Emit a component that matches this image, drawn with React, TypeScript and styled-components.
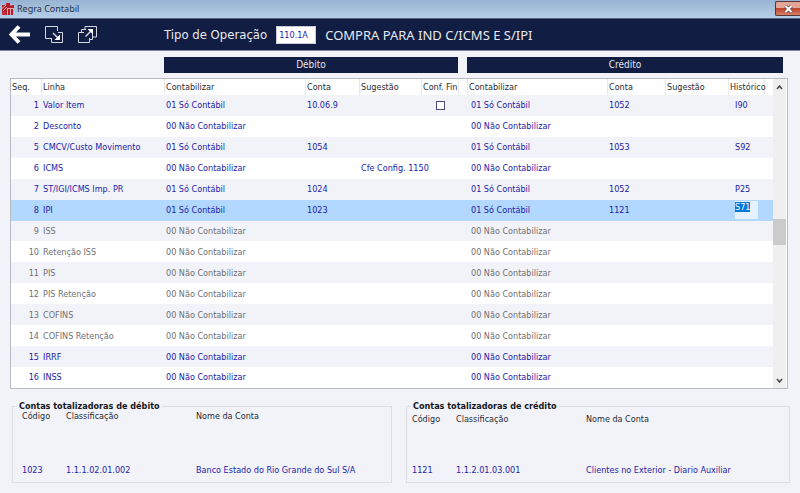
import React, { useEffect, useRef } from "react";
import styled, { createGlobalStyle } from "styled-components";

const navy = "#111d42";
const blue = "#1c1caa";
const grey = "#6f7074";
const bodyFont = `"DejaVu Sans Condensed", "DejaVu Sans", sans-serif`;
const titleFont = `"Noto Sans", sans-serif`;

const GlobalStyle = createGlobalStyle`
  * { box-sizing: border-box; }
  body {
    margin: 0;
    background: #f2f3f9;
    color: #2b2c33;
    font: 9px/12px ${bodyFont};
  }
`;

const TitleBar = styled.header`
  display: flex;
  align-items: flex-start;
  height: 18px;
  padding-left: 2px;
  background: linear-gradient(#98b4d2, #b6cee8);
  h1 {
    flex: 1;
    margin: 0;
    padding: 0 3px;
    font: 9px/18px ${titleFont};
    color: #26313f;
  }
  > svg { margin-top: 3px; }
`;

const CloseButton = styled.button`
  display: grid;
  place-items: center;
  width: 25px;
  height: 15px;
  margin-top: 1px;
  padding: 0;
  border: 1px solid #5e3535;
  border-right: 0;
  border-radius: 2px 0 0 2px;
  background: linear-gradient(#e3a598 0 45%, #bd442d 50%, #d4806a);
`;

const Toolbar = styled.div`
  display: flex;
  align-items: center;
  height: 33px;
  padding-left: 8px;
  border-top: 1px solid #56627f;
  border-bottom: 1px solid #7d859d;
  background: ${navy};
  color: #e8e9f0;
  font: 13px/18px ${bodyFont};
`;

const Actions = styled.nav`
  display: flex;
  align-items: center;
  gap: 14px;
  width: 156px;
`;

const IconButton = styled.button`
  display: flex;
  padding: 0;
  border: 0;
  background: none;
  color: #fff;
`;

const OperationLabel = styled.label`
  display: flex;
  align-items: center;
  gap: 9px;
`;

const OperationInput = styled.input`
  width: 40px;
  height: 18px;
  padding: 0 2px;
  border: 1px solid #c9ccd8;
  background: #fff;
  color: ${blue};
  font: 9px/12px ${bodyFont};
`;

const OperationName = styled.output`
  margin-left: 9px;
  font-family: ${titleFont};
`;

const Content = styled.main`
  padding: 6px 10px 0;
`;

const Sections = styled.div`
  display: grid;
  grid-template-columns: 154fr 294fr 9fr 316fr 7fr;
`;

const SectionTitle = styled.h2<{ $column: number }>`
  grid-column: ${(p) => p.$column};
  margin: 0;
  background: ${navy};
  color: #e4e5ec;
  font: 10px/16px ${bodyFont};
  text-align: center;
`;

const Frame = styled.div`
  display: flex;
  margin: 5px 2px 0 0;
  border: 1px solid #b9bac2;
  background: #fff;
`;

const Grid = styled.table`
  flex: 1;
  width: 0;
  height: 309px;
  table-layout: fixed;
  border-collapse: separate;
  border-spacing: 0;
`;

const Head = styled.th`
  height: 16px;
  padding: 0 0 0 1px;
  border-left: 1px solid #e7e7ec;
  font-weight: 400;
  text-align: left;
  white-space: nowrap;
  &:first-child { border-left: 0; }
`;

const Row = styled.tr<{ $tone: "active" | "muted" | "selected" }>`
  color: ${(p) => (p.$tone === "muted" ? grey : blue)};
  &:nth-child(odd) { background: #f2f3f9; }
  && { ${(p) => p.$tone === "selected" && "background: #b2d8ff;"} }
`;

const Cell = styled.td<{ $indent?: number; $align?: string }>`
  padding: 0 0 0 ${(p) => p.$indent ?? 2}px;
  line-height: 18px;
  text-align: ${(p) => p.$align ?? "left"};
  white-space: nowrap;
`;

const SeqCell = styled(Cell)`
  padding-right: 2px;
`;

const Check = styled.input`
  appearance: none;
  display: block;
  width: 9px;
  height: 9px;
  margin: 0 auto;
  border: 1px solid #4b4b80;
  background: #fff;
`;

const HistoryInput = styled.input`
  display: block;
  width: 23px;
  height: 18px;
  padding: 0 0 7px;
  border: 0;
  outline: 0;
  background: #e6f2ff;
  color: ${blue};
  font: 9px/11px ${bodyFont};
  &::selection { background: #0078d7; color: #fff; }
`;

const ScrollBar = styled.div`
  display: flex;
  flex-direction: column;
  align-items: center;
  justify-content: space-between;
  width: 13px;
  margin-right: 1px;
  background: #efeff0;
`;

const ScrollButton = styled.button`
  display: grid;
  place-items: center;
  width: 13px;
  height: 16px;
  padding: 0;
  border: 0;
  background: none;
`;

const Track = styled.div`
  flex: 1;
  width: 100%;
  display: flex;
  flex-direction: column;
  &::before { content: ""; flex: 124; }
  &::after { content: ""; flex: 128; }
`;

const Thumb = styled.div`
  height: 26px;
  background: #cbcbcc;
`;

const Totals = styled.div`
  display: grid;
  grid-template-columns: 380fr 384fr;
  gap: 14px;
  margin: 11px 0 0 2px;
`;

const Group = styled.fieldset<{ $inset: number }>`
  min-width: 0;
  height: 83px;
  margin: 0;
  padding: 0 0 0 ${(p) => p.$inset}px;
  border: 1px solid #dddee3;
`;

const Legend = styled.legend<{ $pull: number }>`
  margin-left: ${(p) => p.$pull}px;
  padding: 0 2px;
  color: #15161a;
  font-weight: 700;
`;

const Account = styled.dl<{ $top: number }>`
  display: grid;
  grid-template-columns: 44px 130px 1fr;
  grid-auto-flow: column;
  grid-template-rows: 12px 12px;
  row-gap: ${(p) => 42 - p.$top}px;
  margin: ${(p) => p.$top - 2}px 0 0;
  dt, dd { margin: 0; white-space: nowrap; }
  dd { color: ${blue}; }
`;

type Line = {
  seq: number;
  name: string;
  posted?: boolean;
  debit?: string;
  suggestion?: string;
  check?: boolean;
  credit?: string;
  history?: string;
  tone?: "active" | "muted" | "selected";
};

const lines: Line[] = [
  { seq: 1, name: "Valor Item", posted: true, debit: "10.06.9", check: true, credit: "1052", history: "I90" },
  { seq: 2, name: "Desconto" },
  { seq: 5, name: "CMCV/Custo Movimento", posted: true, debit: "1054", credit: "1053", history: "S92" },
  { seq: 6, name: "ICMS", suggestion: "Cfe Config. 1150" },
  { seq: 7, name: "ST/IGI/ICMS Imp. PR", posted: true, debit: "1024", credit: "1052", history: "P25" },
  { seq: 8, name: "IPI", posted: true, debit: "1023", credit: "1121", history: "S71", tone: "selected" },
  { seq: 9, name: "ISS", tone: "muted" },
  { seq: 10, name: "Retenção ISS", tone: "muted" },
  { seq: 11, name: "PIS", tone: "muted" },
  { seq: 12, name: "PIS Retenção", tone: "muted" },
  { seq: 13, name: "COFINS", tone: "muted" },
  { seq: 14, name: "COFINS Retenção", tone: "muted" },
  { seq: 15, name: "IRRF" },
  { seq: 16, name: "INSS" },
];

const columns: [string, number][] = [
  ["Seq.", 30], ["Linha", 123], ["Contabilizar", 141], ["Conta", 54],
  ["Sugestão", 62], ["Conf. Fin", 37], ["", 9], ["Contabilizar", 140],
  ["Conta", 58], ["Sugestão", 63], ["Histórico", 36], ["", 9],
];

function Logo() {
  return (
    <svg width="12" height="12" viewBox="0 0 12 12" aria-hidden="true">
      <path d="M0 2h4V0h4v2h4v10H0z" fill="#b3202c" />
      <path d="M0 5.500 4 2M1 8l4-4M5.500 12V6M8.500 12V6M11.500 12V6M5 5.500h7M9 1v2" stroke="#e3a3ab" fill="none" />
      <path d="M0 9h4v3H0z" fill="#c8323e" />
    </svg>
  );
}

function BackIcon() {
  return (
    <svg width="23" height="20" viewBox="0 0 23 20" fill="none" stroke="currentColor" aria-hidden="true">
      <path d="M22 9.500H4" strokeWidth="4" />
      <path d="M11 1.500 3.500 9.500l7.500 8" strokeWidth="4" />
    </svg>
  );
}

function ImportIcon() {
  return (
    <svg width="19" height="19" viewBox="0 0 19 19" fill="none" stroke="#d6d9e4" aria-hidden="true">
      <path d="M7 13.500H.500v-12h12V6" />
      <path d="M13 7.500h4.500v10h-11V13" />
      <path d="m8 8 6.500 6.500" strokeWidth="1.500" />
      <path d="M15 9.500V15H9.500z" fill="#fff" stroke="none" />
    </svg>
  );
}

function ExportIcon() {
  return (
    <svg width="19" height="19" viewBox="0 0 19 19" fill="none" stroke="#d6d9e4" aria-hidden="true">
      <path d="M6 7.500H.500v10h11V13" />
      <path d="M3.500 7V4.500H8M14.500 9v5.500H12" />
      <path d="M7 4V1.500h11.500V12H15" />
      <path d="m7.500 11.500 6.500-6.500" strokeWidth="1.500" />
      <path d="M9.500 4H15v5.500z" fill="#fff" stroke="none" />
    </svg>
  );
}

function Chevron({ up = false }: { up?: boolean }) {
  return (
    <svg width="7" height="5" viewBox="0 0 7 5" fill="none" stroke="#45464a" strokeWidth="1.500" aria-hidden="true">
      <path d={up ? "M1 4l2.500-3L6 4" : "M1 1l2.500 3L6 1"} />
    </svg>
  );
}

function SelectedHistory({ value }: { value: string }) {
  const ref = useRef<HTMLInputElement>(null);
  useEffect(() => {
    ref.current?.focus();
    ref.current?.select();
  }, []);
  return <HistoryInput ref={ref} defaultValue={value} aria-label="Histórico" />;
}

function LineRow({ line }: { line: Line }) {
  const tone = line.tone ?? "active";
  const mode = line.posted ? "01 Só Contábil" : "00 Não Contabilizar";
  return (
    <Row $tone={tone}>
      <SeqCell $align="right">{line.seq}</SeqCell>
      <Cell>{line.name}</Cell>
      <Cell>{mode}</Cell>
      <Cell>{line.debit}</Cell>
      <Cell>{line.suggestion}</Cell>
      <Cell>{line.check && <Check type="checkbox" aria-label="Conf. Fin" />}</Cell>
      <Cell />
      <Cell $indent={4}>{mode}</Cell>
      <Cell>{line.credit}</Cell>
      <Cell />
      <Cell $indent={7}>
        {tone === "selected" ? <SelectedHistory value={line.history ?? ""} /> : line.history}
      </Cell>
      <Cell />
    </Row>
  );
}

function AccountGroup(props: {
  title: string; inset: number; pull: number; top: number;
  code: string; classification: string; name: string;
}) {
  return (
    <Group $inset={props.inset}>
      <Legend $pull={props.pull}>{props.title}</Legend>
      <Account $top={props.top}>
        <dt>Código</dt><dd>{props.code}</dd>
        <dt>Classificação</dt><dd>{props.classification}</dd>
        <dt>Nome da Conta</dt><dd>{props.name}</dd>
      </Account>
    </Group>
  );
}

export default function App() {
  return (
    <>
      <GlobalStyle />
      <TitleBar>
        <Logo />
        <h1>Regra Contabil</h1>
        <CloseButton aria-label="Fechar">
          <svg width="9" height="8" viewBox="0 0 9 8" aria-hidden="true">
            <path d="m1.500 1 6 6m0-6-6 6" stroke="#5d4a4c" strokeWidth="3.500" />
            <path d="m1.500 1 6 6m0-6-6 6" stroke="#fff" strokeWidth="2" />
          </svg>
        </CloseButton>
      </TitleBar>
      <Toolbar>
        <Actions>
          <IconButton aria-label="Voltar"><BackIcon /></IconButton>
          <IconButton aria-label="Importar"><ImportIcon /></IconButton>
          <IconButton aria-label="Exportar"><ExportIcon /></IconButton>
        </Actions>
        <OperationLabel>
          Tipo de Operação
          <OperationInput defaultValue="110.1A" />
        </OperationLabel>
        <OperationName>COMPRA PARA IND C/ICMS E S/IPI</OperationName>
      </Toolbar>
      <Content>
        <Sections>
          <SectionTitle $column={2}>Débito</SectionTitle>
          <SectionTitle $column={4}>Crédito</SectionTitle>
        </Sections>
        <Frame>
          <Grid>
            <colgroup>
              {columns.map(([, width], i) => <col key={i} width={width} />)}
            </colgroup>
            <thead>
              <tr>{columns.map(([label], i) => <Head key={i}>{label}</Head>)}</tr>
            </thead>
            <tbody>
              {lines.map((line) => <LineRow key={line.seq} line={line} />)}
            </tbody>
          </Grid>
          <ScrollBar>
            <ScrollButton aria-label="Rolar para cima"><Chevron up /></ScrollButton>
            <Track><Thumb /></Track>
            <ScrollButton aria-label="Rolar para baixo"><Chevron /></ScrollButton>
          </ScrollBar>
        </Frame>
        <Totals>
          <AccountGroup title="Contas totalizadoras de débito" inset={9} pull={-5} top={0}
            code="1023" classification="1.1.1.02.01.002" name="Banco Estado do Rio Grande do Sul S/A" />
          <AccountGroup title="Contas totalizadoras de crédito" inset={5} pull={-1} top={3}
            code="1121" classification="1.1.2.01.03.001" name="Clientes no Exterior - Diario Auxiliar" />
        </Totals>
      </Content>
    </>
  );
}
